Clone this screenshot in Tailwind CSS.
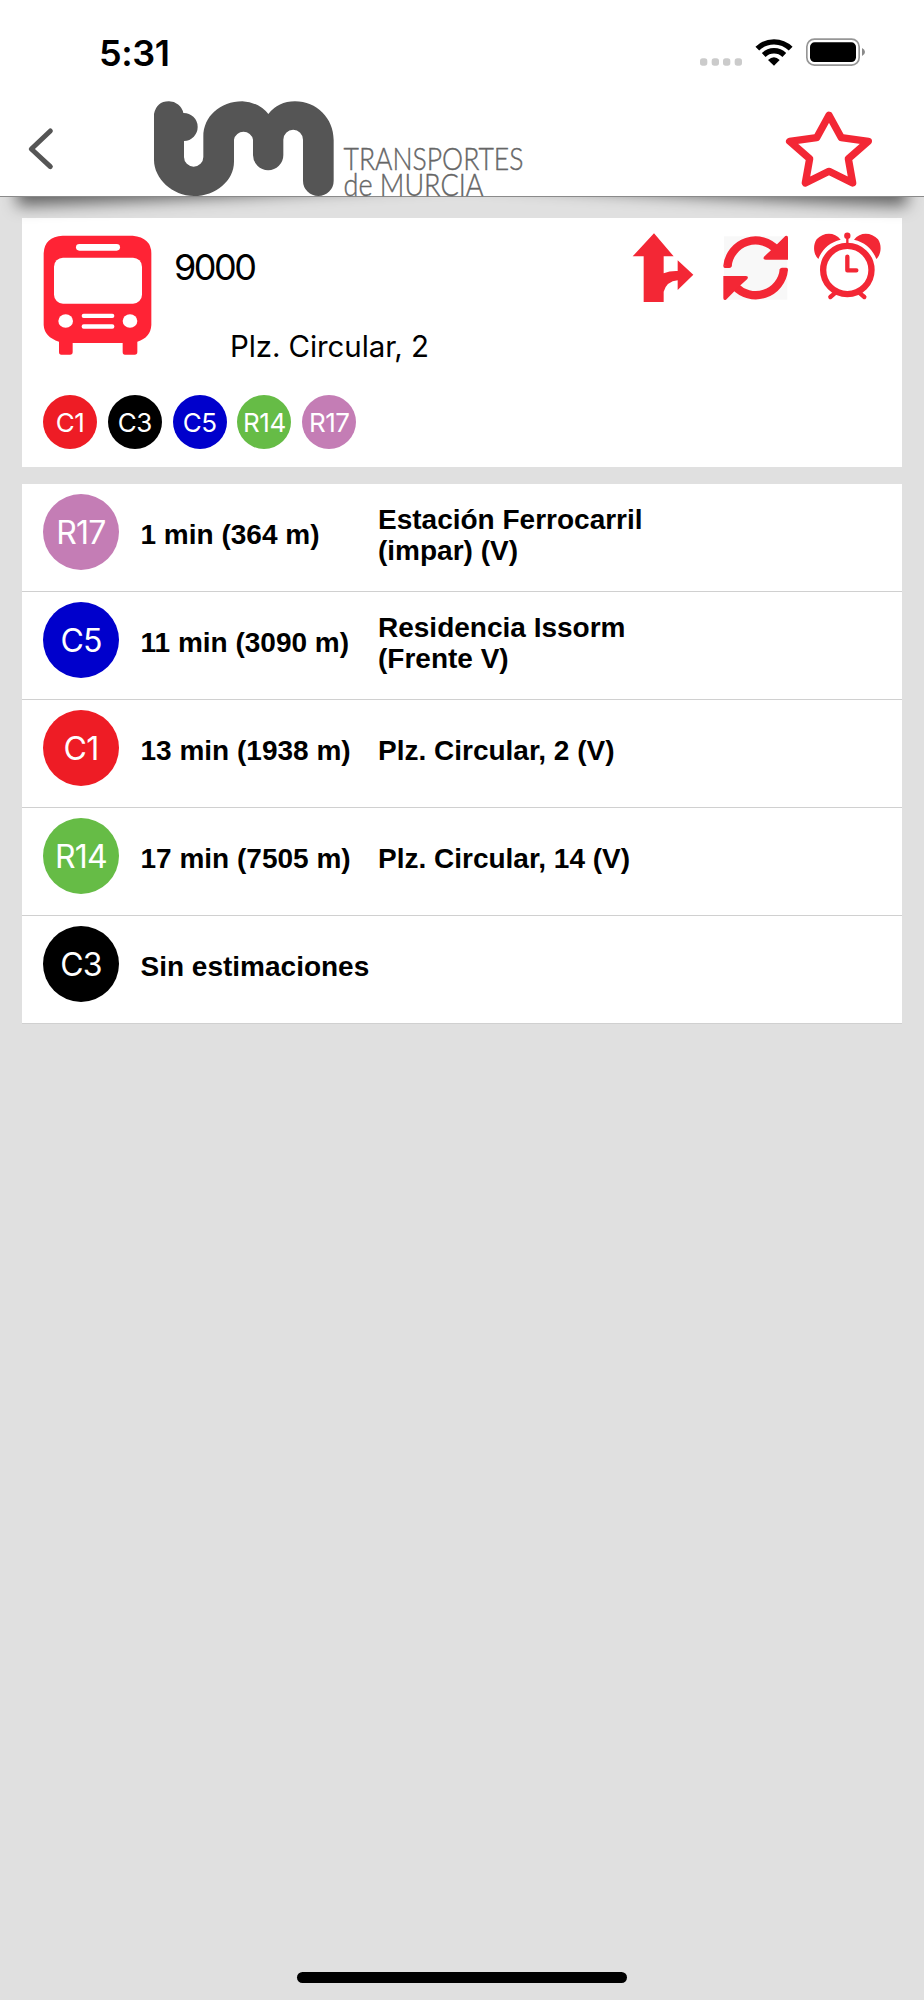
<!DOCTYPE html>
<html lang="es">
<head>
  <meta charset="UTF-8" />
  <meta name="viewport" content="width=device-width, initial-scale=1.0" />
  <title>Parada 9000</title>
  <script src="https://cdn.jsdelivr.net/npm/@tailwindcss/browser@4"></script>
</head>
<body class="bg-[#e0e0e0] text-black font-['Inter',sans-serif]">
  <div class="relative w-[924px] h-[2000px] flex flex-col overflow-hidden">

    <!-- Header -->
    <header class="bg-white h-[197px] shrink-0 border-b border-[#8a8a8a]">
      <!-- Status bar -->
      <div class="h-[101px] pl-[99px] pr-[58px] pt-[30px] flex justify-between">
        <span class="text-[36px] leading-[46px] font-semibold tracking-[-0.4px]">5:31</span>
        <svg class="mt-[6px] w-[168px] h-[32px]" viewBox="708 108 504 96">
          <g fill="#cbcbcb">
            <rect x="714" y="175" width="22" height="22" rx="8" />
            <rect x="749" y="175" width="22" height="22" rx="8" />
            <rect x="783" y="175" width="22" height="22" rx="8" />
            <rect x="818" y="175" width="22" height="22" rx="8" />
          </g>
          <path d="M886 146A71 71 0 0 1 986 146M905 165A44 44 0 0 1 967 165" fill="none" stroke="#000" stroke-width="16" />
          <path d="M918 180Q936 164 953 180L936 197Z" />
          <rect x="1034.500" y="117.500" width="157" height="78" rx="23" fill="none" stroke="#969696" stroke-width="5" />
          <rect x="1044" y="127" width="138" height="59" rx="14" />
          <path d="M1200 144Q1209 148 1209 156T1200 168Z" fill="#8a8a8a" />
        </svg>
      </div>
      <!-- Nav -->
      <div class="h-[95px] pl-[27px] pr-[50px] flex">
        <svg class="mt-[26px] w-[28px] h-[44px] shrink-0" viewBox="81 381 84 132" fill="none" stroke="#555" stroke-width="15" stroke-linecap="round" stroke-linejoin="round">
          <path d="M151 393L94 447L151 500" />
        </svg>
        <svg class="ml-[99px] w-[372px] h-[95px] overflow-visible" viewBox="0 0 372 95">
          <path transform="translate(-9 -11) scale(.33333)" fill="#555" d="M27 72Q35 34 71 34A44 44 0 0 1 115 69A42 42 0 0 1 117 153V201A29 29 0 0 0 175 201V140C175 80 225 34 292 34Q340 36 370 72Q400 34 450 34C515 34 566 85 566 150V272A46 46 0 0 1 474 272V149A29 29 0 0 0 415 149V195A45.500 45.500 0 0 1 324 195V149A29 29 0 0 0 267 149V215C267 272 212 318 147 318C82 318 27 265 27 210Z" />
          <g class="font-['Lato',sans-serif] font-light" fill="#666" stroke="#666" stroke-width=".4" font-size="31">
            <text x="189.500" y="68.500" textLength="180" lengthAdjust="spacingAndGlyphs">TRANSPORTES</text>
            <text x="189.500" y="94.500" textLength="140" lengthAdjust="spacingAndGlyphs">de MURCIA</text>
          </g>
        </svg>
        <svg class="ml-auto mt-[8px] w-[90px] h-[80px]" viewBox="966 327 270 240" fill="none" stroke="#f32735" stroke-width="22" stroke-linejoin="round">
          <path d="M1101 346L1138 413L1219 424L1159 476L1172 549L1101 514L1030 549L1043 476L983 424L1064 413Z" />
        </svg>
      </div>
    </header>

    <!-- Lifted corners shadow under the header -->
    <svg class="absolute left-0 top-[197px] w-[924px] h-[40px] z-10" viewBox="0 0 924 40">
      <defs>
        <filter id="soft" filterUnits="userSpaceOnUse" x="-40" y="-80" width="1004" height="160"><feGaussianBlur stdDeviation="8" /></filter>
      </defs>
      <path d="M17 -50H907V9Q680 0 462 -15Q244 0 17 9Z" fill="#000" fill-opacity=".56" filter="url(#soft)" />
    </svg>

    <!-- Stop -->
    <section class="mx-[22px] mt-[21px] h-[249px] shrink-0 bg-white px-[21px] flex flex-col">
      <div class="flex h-[177px] pt-[17px]">
        <svg class="w-[109px] h-[120px]" viewBox="129 75 327 360">
          <path fill="#ff2335" d="M188 77H398Q454 83 454 130V345Q452 383 412 395V426Q412 434 404 434H375Q368 434 368 426V399H218V426Q218 434 210 434H184Q177 434 177 426V395Q133 381 131 345V130Q133 80 188 77Z" />
          <g fill="#fff">
            <rect x="228" y="102" width="132" height="20" rx="10" />
            <rect x="162" y="143" width="264" height="138" rx="27" />
            <rect x="245" y="311" width="98" height="13" rx="6" />
            <rect x="245" y="343" width="98" height="13" rx="6" />
            <ellipse cx="197" cy="333" rx="22" ry="20" />
            <ellipse cx="390" cy="333" rx="22" ry="20" />
          </g>
        </svg>
        <div class="ml-[22px] flex flex-col">
          <span class="text-[36px] leading-[44px] mt-[10px] tracking-[-2.5px]">9000</span>
          <span class="text-[29.500px] leading-[36px] mt-[39px] ml-[56px] tracking-[-0.1px]">Plz. Circular, 2</span>
        </div>
        <!-- Actions -->
        <div class="ml-auto -mt-[3px] flex h-[72px]">
          <svg class="w-[249px] h-[72px]" viewBox="96 66 747 216" fill="#f32735">
            <path d="M162 70L221 139H191V190Q210 182 233 183V151L280 194L233 240V211Q200 214 191 245V276H131V139H98Z" />
            <rect x="372" y="79" width="190" height="190" fill="#f8f8f8" />
            <g id="turn">
              <path d="M382.500 168A84.500 84.500 0 0 1 530 120" fill="none" stroke="#f32735" stroke-width="25" />
              <path d="M370 166H395V168Q394 174 388 174H375Q370 174 370 168Z" />
              <path d="M556 78Q564 75 564 83V149H497Q487 149 492 140L516 118Z" />
            </g>
            <use href="#turn" transform="rotate(180 467 173.500)" />
            <circle cx="742" cy="180" r="72.500" fill="none" stroke="#f32735" stroke-width="19" />
            <path d="M742 140V181H769" fill="none" stroke="#f32735" stroke-width="13" stroke-linecap="round" stroke-linejoin="round" />
            <circle cx="742" cy="77" r="9.500" />
            <path d="M742 77V102" stroke="#f32735" stroke-width="7" />
            <path id="bell" d="M655 147C640 133 638 105 650 88C669 67 703 64 722 89C688 97 666 118 655 147Z" />
            <use href="#bell" transform="matrix(-1 0 0 1 1484 0)" />
            <path d="M704 250L691 261M780 250L793 261" stroke="#f32735" stroke-width="13" stroke-linecap="round" />
          </svg>
        </div>
      </div>
      <div class="flex gap-[10.8px] text-white text-[26px] tracking-[-0.5px]">
        <span class="size-[54px] rounded-full bg-[#ee1c25] flex items-center justify-center">C1</span>
        <span class="size-[54px] rounded-full bg-black flex items-center justify-center">C3</span>
        <span class="size-[54px] rounded-full bg-[#0000cc] flex items-center justify-center">C5</span>
        <span class="size-[54px] rounded-full bg-[#66bc46] flex items-center justify-center">R14</span>
        <span class="size-[54px] rounded-full bg-[#c47db5] flex items-center justify-center">R17</span>
      </div>
    </section>

    <!-- Arrivals -->
    <ul class="mx-[22px] mt-[17px] bg-white font-['Liberation_Sans',sans-serif] font-bold text-[28px] leading-[31px]">
      <li class="h-[108px] border-b border-[#d0d0d0] pl-[21px] flex items-center">
        <span class="size-[76px] mb-[11px] rounded-full bg-[#c47db5] text-white font-['Inter',sans-serif] font-normal tracking-[-0.8px] text-[32px] flex items-center justify-center">R17</span>
        <span class="mb-[6px] ml-[21.5px] w-[237.5px]">1 min (364 m)</span>
        <span class="mb-[6px] w-[290px]">Estación Ferrocarril (impar) (V)</span>
      </li>
      <li class="h-[108px] border-b border-[#d0d0d0] pl-[21px] flex items-center">
        <span class="size-[76px] mb-[11px] rounded-full bg-[#0000cc] text-white font-['Inter',sans-serif] font-normal tracking-[-0.8px] text-[32px] flex items-center justify-center">C5</span>
        <span class="mb-[6px] ml-[21.5px] w-[237.5px]">11 min (3090 m)</span>
        <span class="mb-[6px] w-[290px]">Residencia Issorm (Frente V)</span>
      </li>
      <li class="h-[108px] border-b border-[#d0d0d0] pl-[21px] flex items-center">
        <span class="size-[76px] mb-[11px] rounded-full bg-[#ee1c25] text-white font-['Inter',sans-serif] font-normal tracking-[-0.8px] text-[32px] flex items-center justify-center">C1</span>
        <span class="mb-[6px] ml-[21.5px] w-[237.5px]">13 min (1938 m)</span>
        <span class="mb-[6px] w-[290px]">Plz. Circular, 2 (V)</span>
      </li>
      <li class="h-[108px] border-b border-[#d0d0d0] pl-[21px] flex items-center">
        <span class="size-[76px] mb-[11px] rounded-full bg-[#66bc46] text-white font-['Inter',sans-serif] font-normal tracking-[-0.8px] text-[32px] flex items-center justify-center">R14</span>
        <span class="mb-[6px] ml-[21.5px] w-[237.5px]">17 min (7505 m)</span>
        <span class="mb-[6px] w-[290px]">Plz. Circular, 14 (V)</span>
      </li>
      <li class="h-[108px] border-b border-[#d0d0d0] pl-[21px] flex items-center">
        <span class="size-[76px] mb-[11px] rounded-full bg-black text-white font-['Inter',sans-serif] font-normal tracking-[-0.8px] text-[32px] flex items-center justify-center">C3</span>
        <span class="mb-[6px] ml-[21.5px]">Sin estimaciones</span>
      </li>
    </ul>

    <!-- Home indicator -->
    <div class="mt-auto mb-[17px] mx-auto w-[330px] h-[11px] rounded-full bg-black"></div>
  </div>
</body>
</html>
